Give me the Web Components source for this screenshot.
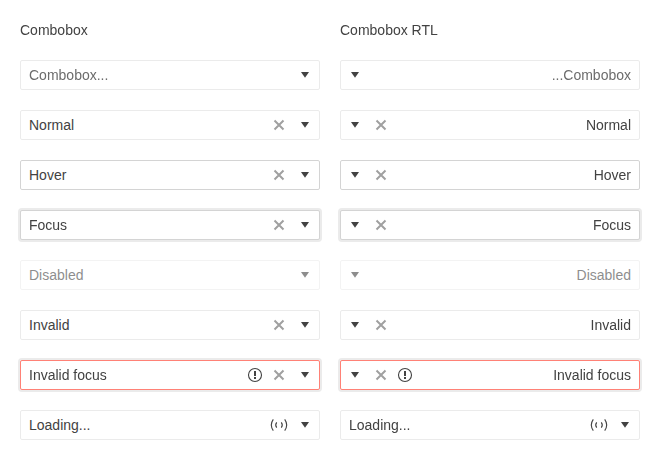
<!DOCTYPE html>
<html lang="en">
<head>
<meta charset="utf-8">
<title>Combobox</title>
<style>
html,body{margin:0;background:#fff}
body{font:14px/20px "Liberation Sans",Arial,sans-serif;color:#424242}
</style>
</head>
<body>
<combo-page></combo-page>
<script>
class ComboIcon extends HTMLElement {
  connectedCallback() {
    const shapes = {
      arrow: '<path d="M8 5h8l-4 5.8z" transform="translate(0 4)" fill="#424242"/>',
      clear: '<path d="M7.5 7.5l9 9M16.5 7.5l-9 9" stroke="#a0a0a0" stroke-width="2" fill="none"/>',
      warning: '<circle cx="12" cy="12" r="6.5" fill="none" stroke="#424242" stroke-width="1.1"/><path d="M11 8h2v5h-2zM11 14h2v2h-2z" fill="#424242"/>',
      loading: '<path d="M6.3 6.4q-4 5.6 0 11.2M17.7 6.4q4 5.6 0 11.2M9.7 9.3q-2 2.7 0 5.4M14.3 9.3q2 2.7 0 5.4" stroke="#424242" stroke-width="1.1" fill="none"/>'
    };
    this.attachShadow({mode: 'open'}).innerHTML = `
      <style>
        :host{display:flex;flex:none;width:24px;align-items:center;justify-content:center}
        :host([name=arrow]){width:28px}
        svg{display:block;width:24px;height:24px}
      </style>
      <svg viewBox="0 0 24 24" aria-hidden="true">${shapes[this.getAttribute('name')]}</svg>`;
  }
}
customElements.define('combo-icon', ComboIcon);

class ComboBox extends HTMLElement {
  connectedCallback() {
    const icons = (this.getAttribute('icons') || '').split(' ').filter(Boolean);
    this.attachShadow({mode: 'open'}).innerHTML = `
      <style>
        :host{display:flex;box-sizing:border-box;width:300px;height:30px;border:1px solid #ebebeb;border-radius:2px;background:#fff}
        :host([rtl]){flex-direction:row-reverse}
        :host([state=placeholder]){color:#6c6c6c}
        :host([state=hover]){border-color:#d4d4d4}
        :host([state=focus]){border-color:#d4d4d4;box-shadow:0 0 0 2px #ebebeb}
        :host([state=invalid]){border-color:#ff8176;box-shadow:0 0 0 2px #ebebeb}
        :host([state=disabled]){opacity:.6}
        .text{flex:1;padding:4px 8px;line-height:20px;white-space:nowrap}
        :host([rtl]) .text{text-align:right}
      </style>
      <div class="text"><slot></slot></div>
      ${icons.map(n => `<combo-icon name="${n}"></combo-icon>`).join('')}
      <combo-icon name="arrow"></combo-icon>`;
  }
}
customElements.define('combo-box', ComboBox);

class ComboColumn extends HTMLElement {
  connectedCallback() {
    this.attachShadow({mode: 'open'}).innerHTML = `
      <style>
        :host{display:flex;flex-direction:column;gap:20px;width:300px}
        h2{margin:0;font:inherit;height:20px}
      </style>
      <h2><slot name="title"></slot></h2><slot></slot>`;
  }
}
customElements.define('combo-column', ComboColumn);

class ComboPage extends HTMLElement {
  connectedCallback() {
    const column = (title, rtl) => `
      <combo-column>
        <span slot="title">${title}</span>
        <combo-box ${rtl} state="placeholder">${rtl ? '...Combobox' : 'Combobox...'}</combo-box>
        <combo-box ${rtl} icons="clear">Normal</combo-box>
        <combo-box ${rtl} icons="clear" state="hover">Hover</combo-box>
        <combo-box ${rtl} icons="clear" state="focus">Focus</combo-box>
        <combo-box ${rtl} state="disabled">Disabled</combo-box>
        <combo-box ${rtl} icons="clear">Invalid</combo-box>
        <combo-box ${rtl} icons="warning clear" state="invalid">Invalid focus</combo-box>
        <combo-box icons="loading">Loading...</combo-box>
      </combo-column>`;
    this.attachShadow({mode: 'open'}).innerHTML = `
      <style>:host{display:flex;gap:20px;padding:20px;will-change:opacity}</style>
      ${column('Combobox', '')}${column('Combobox RTL', 'rtl')}`;
  }
}
customElements.define('combo-page', ComboPage);
</script>
</body>
</html>
